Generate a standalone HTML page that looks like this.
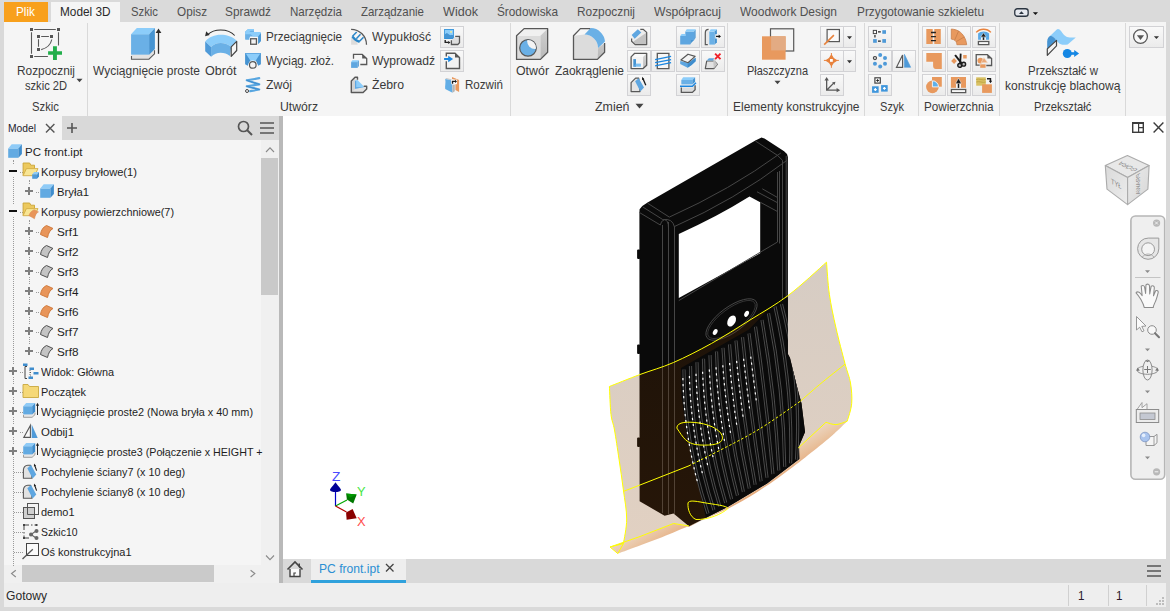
<!DOCTYPE html>
<html lang="pl"><head><meta charset="utf-8"><title>PC front.ipt</title>
<style>
html,body{margin:0;padding:0;background:#d9d9d9;overflow:hidden}
body{width:1170px;height:611px;font-family:"Liberation Sans",sans-serif}
#app{position:relative;width:1170px;height:611px;background:#d9d9d9;overflow:hidden}
#app div,#app svg,#app span{position:absolute}
.tx{white-space:nowrap;transform-origin:0 50%;font-family:"Liberation Sans",sans-serif}
.tx.b{font-weight:bold}
.tabbar{left:0;top:0;width:1170px;height:22px;background:#dadada}
.plik{left:4px;top:2px;width:44px;height:20px;background:#f8a01c}
.acttab{left:51px;top:2px;width:69px;height:20px;background:#f5f5f5}
.ribbon{left:4px;top:22px;width:1162px;height:94px;background:#f5f5f5}
.sep{width:1px;top:23px;height:93px;background:#d9d9d9}
.bb{background:linear-gradient(#f9f9f9,#ebebeb);border:1px solid #d2d2d5;box-sizing:border-box;height:22px}
.browser{left:4px;top:116px;width:275px;height:467px;background:#f5f5f5}
.bhead{left:62px;top:116px;width:217px;height:24px;background:#d9d9d9}
.split{left:279px;top:116px;width:4px;height:467px;background:#b9b9b9}
.vscroll{left:261px;top:140px;width:18px;height:425px;background:#f0f0f0}
.vthumb{left:261px;top:158px;width:17px;height:137px;background:#c9c9c9}
.hscroll{left:4px;top:565px;width:275px;height:18px;background:#f0f0f0}
.hthumb{left:22px;top:565px;width:192px;height:17px;background:#cacaca}
.doctabs{left:283px;top:559px;width:883px;height:24px;background:#d9d9d9}
.doctab{left:311px;top:559px;width:95px;height:21px;background:#eeeeee}
.doctabu{left:311px;top:580px;width:95px;height:3px;background:#2fa1dc}
.status{left:4px;top:583px;width:1162px;height:24px;background:#eeeeee}
.ssep{width:1px;top:585px;height:21px;background:#d0d0d0}
#vp{left:283px;top:116px;background:#fff}
.ic{overflow:visible}
.dotv{width:0;border-left:1px dotted #9a9a9a}
.doth{height:0;border-top:1px dotted #9a9a9a}
</style></head><body>
<div id="app">
<div class="tabbar"></div><div class="plik"></div><div class="acttab"></div>
<div class="ribbon"></div>
<div class="sep" style="left:87px"></div><div class="sep" style="left:510px"></div><div class="sep" style="left:727px"></div><div class="sep" style="left:864px"></div><div class="sep" style="left:918px"></div><div class="sep" style="left:999px"></div><div class="sep" style="left:1125px"></div>
<div class="bb" style="left:440px;top:26px;width:24px"></div><div class="bb" style="left:440px;top:50px;width:24px"></div><div class="bb" style="left:627px;top:26px;width:24px"></div><div class="bb" style="left:627px;top:50px;width:24px"></div><div class="bb" style="left:627px;top:74px;width:24px"></div><div class="bb" style="left:651px;top:50px;width:24px"></div><div class="bb" style="left:676px;top:26px;width:24px"></div><div class="bb" style="left:676px;top:50px;width:24px"></div><div class="bb" style="left:676px;top:74px;width:24px"></div><div class="bb" style="left:701px;top:26px;width:24px"></div><div class="bb" style="left:701px;top:50px;width:24px"></div><div class="bb" style="left:820px;top:26px;width:24px"></div><div class="bb" style="left:820px;top:50px;width:24px"></div><div class="bb" style="left:820px;top:74px;width:24px"></div><div class="bb" style="left:843px;top:26px;width:13px"></div><div class="bb" style="left:843px;top:50px;width:13px"></div><div class="bb" style="left:868px;top:26px;width:24px"></div><div class="bb" style="left:868px;top:50px;width:24px"></div><div class="bb" style="left:868px;top:74px;width:24px"></div><div class="bb" style="left:892px;top:50px;width:24px"></div><div class="bb" style="left:922px;top:26px;width:24px"></div><div class="bb" style="left:922px;top:50px;width:24px"></div><div class="bb" style="left:922px;top:74px;width:24px"></div><div class="bb" style="left:947px;top:26px;width:24px"></div><div class="bb" style="left:947px;top:50px;width:24px"></div><div class="bb" style="left:947px;top:74px;width:24px"></div><div class="bb" style="left:972px;top:26px;width:24px"></div><div class="bb" style="left:972px;top:50px;width:24px"></div><div class="bb" style="left:972px;top:74px;width:24px"></div><div class="bb" style="left:1129px;top:26px;width:35px"></div>
<div class="browser"></div><div class="bhead"></div><div class="split"></div>
<div class="vscroll"></div><div class="vthumb"></div><div class="hscroll"></div><div class="hthumb"></div>
<div class="dotv" style="left:13px;top:160px;height:406px"></div><div class="dotv" style="left:29px;top:180px;height:8px"></div><div class="dotv" style="left:29px;top:220px;height:136px"></div><div class="doth" style="left:18px;top:172px;width:5px"></div><div class="doth" style="left:18px;top:212px;width:5px"></div><div class="doth" style="left:18px;top:372px;width:5px"></div><div class="doth" style="left:18px;top:392px;width:5px"></div><div class="doth" style="left:18px;top:412px;width:5px"></div><div class="doth" style="left:18px;top:432px;width:5px"></div><div class="doth" style="left:18px;top:452px;width:5px"></div><div class="doth" style="left:14px;top:472px;width:9px"></div><div class="doth" style="left:14px;top:492px;width:9px"></div><div class="doth" style="left:14px;top:512px;width:9px"></div><div class="doth" style="left:14px;top:532px;width:9px"></div><div class="doth" style="left:14px;top:552px;width:9px"></div><div class="doth" style="left:34px;top:192px;width:5px"></div><div class="doth" style="left:34px;top:232px;width:5px"></div><div class="doth" style="left:34px;top:252px;width:5px"></div><div class="doth" style="left:34px;top:272px;width:5px"></div><div class="doth" style="left:34px;top:292px;width:5px"></div><div class="doth" style="left:34px;top:312px;width:5px"></div><div class="doth" style="left:34px;top:332px;width:5px"></div><div class="doth" style="left:34px;top:352px;width:5px"></div>
<div class="doctabs"></div><div class="doctab"></div><div class="doctabu"></div>
<div class="status"></div><div class="ssep" style="left:1068px"></div><div class="ssep" style="left:1108px"></div><div class="ssep" style="left:1146px"></div>
<svg class="ic" style="left:29px;top:27px" width="34" height="34" viewBox="0 0 34 34"><path d="M5.200 2.500h21.600M2.500 5.200v21.600M29.500 5.200v13.400M5.200 29.500h13.700M12.200 9.500h7.700M9.500 12.200v7.600" fill="none" stroke="#585858" stroke-width="1.100"/><path d="M12.200 22.600c6-1.500 9.500-5 10.600-10.100" fill="none" stroke="#585858" stroke-width="1.100"/><g fill="#555"><rect x="1" y="1" width="3" height="3"/><rect x="28" y="1" width="3" height="3"/><rect x="1" y="28" width="3" height="3"/><rect x="8" y="8" width="3" height="3"/><rect x="21" y="8" width="3" height="3"/><rect x="8" y="21" width="3" height="3"/></g><path d="M24 19.300h3.900v4.900h5.100v3.600h-5.100v5.100h-3.900v-5.100h-4.900v-3.600h4.900z" fill="#22ae4b"/></svg>
<svg class="ic" style="left:129px;top:27px" width="34" height="35" viewBox="0 0 34 35"><path d="M2.070 27.500v5h18l5.800-5.600v-5z" fill="#e2e2e2"/><path d="M2.500 29v3.200h17.400l5.600-5.400v-3.500" fill="none" stroke="#5a5a5a" stroke-width="1.100"/><path d="M2.070 7.150h18.030v20.500h-18.030z" fill="#6ab0e6"/><path d="M2.070 7.150l5.730-6.050h18.100l-5.800 6.050z" fill="#8ccdfa"/><path d="M20.100 7.150l5.800-6.050v20.800l-5.800 5.750z" fill="#4694d2"/><path d="M29.500 26.800v-22" stroke="#2e2e2e" stroke-width="1.300"/><path d="M29.500 1.400l2.900 4.500h-5.800z" fill="#2e2e2e"/></svg>
<svg class="ic" style="left:204px;top:28px" width="35" height="31" viewBox="0 0 35 31"><path d="M30.700 7.500c-3.500-3.800-8.500-5.500-14-5.500c-5.200 0-9.800 1.600-13 4.600" fill="none" stroke="#2e2e2e" stroke-width="1.100"/><path d="M2.200 3.200l3.500 3.700l-4.600 1.300z" fill="#2e2e2e"/><path d="M1.200 13.400c4-4.400 9.400-6.600 15.400-6.600s12 2 16.100 5.900l-5.500 6.200c-3-2.600-6.600-3.900-10.600-3.900s-6.800 1.300-9.500 3.900z" fill="#8ccdfa"/><path d="M7.100 18.900c2.700-2.600 5.500-3.900 9.500-3.900s7.600 1.300 10.600 3.900l-1.400 9.200c-2.600-2.200-5.600-3.300-9.200-3.300s-6.800 1.300-9.500 3.900z" fill="#6ab0e6"/><path d="M1.200 13.400l5.900 5.500v9.800l-5.900-5.500z" fill="#4f9ad8"/><path d="M27.200 18.900l5.500-5.500v9.100l-5.500 5.900z" fill="#f6f6f6" stroke="#444" stroke-width="1.200" stroke-linejoin="round"/></svg>
<svg class="ic" style="left:515px;top:27px" width="35" height="35" viewBox="0 0 35 35"><defs><clipPath id="hc"><circle cx="13" cy="20.900" r="8"/></clipPath><linearGradient id="hg" x1="0" y1="0" x2="0" y2="1"><stop offset="0" stop-color="#cfcfcf"/><stop offset="1" stop-color="#b9b9b9"/></linearGradient></defs><path d="M1.550 8.800h23.900v23.600h-23.900z" fill="#dcdcdc"/><path d="M1.550 8.800l7.550-7.200h23.550l-7.200 7.200z" fill="#f0f0f0"/><path d="M25.450 8.800l7.200-7.200v23.600l-7.200 7.200z" fill="url(#hg)"/><path d="M1.550 8.800l7.550-7.200h23.550v23.600l-7.200 7.200h-23.900z" fill="none" stroke="#585858" stroke-width="1.300" stroke-linejoin="round"/><circle cx="13" cy="20.900" r="8.300" fill="#6ab0e6" stroke="#585858" stroke-width="1.200"/><circle cx="19.800" cy="14.300" r="7.600" fill="#f4f4f4" clip-path="url(#hc)"/></svg>
<svg class="ic" style="left:572px;top:27px" width="35" height="35" viewBox="0 0 35 35"><defs><linearGradient id="fg" x1="0" y1="0" x2="0" y2="1"><stop offset="0" stop-color="#c9c9c9"/><stop offset="1" stop-color="#b6b6b6"/></linearGradient></defs><path d="M1.500 8.800l6.900-7.200h9.800l-5.700 5.900z" fill="#f6f6f6"/><path d="M1.500 8.800l11-1.300a14 14 0 0 1 13.600 13.400l-0.700 11.500h-23.900z" fill="#dcdcdc"/><path d="M26.100 20.900l6.500-4.900v9.200l-7.200 7.200z" fill="url(#fg)"/><path d="M18.200 1.600l0.700-0.500a14.600 14.600 0 0 1 14.100 13.500l-6.900 6.300a14 14 0 0 0 -13.600-13.400z" fill="#6ab0e6"/><path d="M18.200 1.600h-9.800l-6.900 7.200v23.600h23.900l7.200-7.200v-9.200" fill="none" stroke="#585858" stroke-width="1.300" stroke-linejoin="round"/></svg>
<svg class="ic" style="left:761px;top:27px" width="35" height="35" viewBox="0 0 35 35"><rect x="9.500" y="1.800" width="23.200" height="22.200" fill="none" stroke="#585858" stroke-width="1.200"/><rect x="1" y="9.300" width="23.600" height="23.400" fill="#e8995e"/><rect x="10.100" y="9.300" width="14.500" height="14.100" fill="#e3ab83"/></svg>
<svg class="ic" style="left:1045px;top:28px" width="37" height="32" viewBox="0 0 37 32"><path d="M5.300 7.800L11.500 1.800Q12.800 0.500 14.500 1.600C17.500 4 18.500 8 22 8.900C25 9.600 28 9.300 30.800 9.400L22.700 16.600C20 16.900 17.500 17 15.800 16.300C13.500 15.300 12.500 13.500 11.200 12Q9 8.500 5.300 7.800Z" fill="#8ccdfa"/><path d="M5.300 7.800Q2.400 9.500 2.200 13.500V20.900L11.200 12.200Q9 8.500 5.300 7.800Z" fill="#4694d2"/><path d="M2.300 20.900L11.500 12.400V17.900L2.300 27.300Z" fill="#f4f4f4" stroke="#444" stroke-width="1.200" stroke-linejoin="round"/><circle cx="22.300" cy="25.500" r="4.500" fill="#1587e4"/><path d="M25 25.500h5" stroke="#1587e4" stroke-width="2.600"/><path d="M29.200 21.900L34.100 25.500L29.200 29.100Z" fill="#1587e4"/></svg>
<svg class="ic" style="left:244px;top:27px" width="19" height="19" viewBox="0 0 19 19"><path d="M1.100 4.700L4.100 2.100H9.900V5.100H16.100L16.900 6.200V14.100L14.200 17.100V9.400H6V12.800H2L1.100 12.400Z" fill="#6ab0e6"/><path d="M1.100 4.700L4.100 2.100H9.900V5.100H16.100L16.900 6.200L14.200 9.400H9.500L6.500 7.200H1.100Z" fill="#8ccdfa"/><path d="M6.800 3.800H9.900V5.100H5.200z" fill="#6ab0e6"/><path d="M16.900 6.200V14.100L14.200 17.100V9.400Z" fill="#4694d2"/><rect x="5.400" y="10.500" width="8.300" height="8" fill="#fbfbfb"/><rect x="6.650" y="11.750" width="5.800" height="5.500" fill="#f2f2f2" stroke="#585858" stroke-width="1.300"/></svg>
<svg class="ic" style="left:244px;top:51px" width="19" height="19" viewBox="0 0 19 19"><path d="M1.100 2.100H16.900V13.200L14.200 14.700L11.800 9.400H6.300L3.900 14.700L1.100 13.200Z" fill="#4694d2"/><path d="M1.600 2.300H16.400L11.800 9.600L9 11L6.300 9.600Z" fill="#8ccdfa"/><path d="M1.100 2.100H16.900V2.900H1.100Z" fill="#5ea6e0"/><circle cx="8.800" cy="13.900" r="4.500" fill="#fbfbfb"/><circle cx="8.800" cy="13.900" r="3.300" fill="#f4f4f4" stroke="#585858" stroke-width="1.200"/></svg>
<svg class="ic" style="left:244px;top:75px" width="19" height="19" viewBox="0 0 19 19"><path d="M15.200 3.200L2.800 5.300L15.200 9.400L2.800 11.300L15.200 14.500L6.300 16.200" fill="none" stroke="#58a6e0" stroke-width="2.200" stroke-linejoin="round" stroke-linecap="round"/><path d="M2.800 5.300L15.200 9.400M2.800 11.300L15.200 14.500" fill="none" stroke="#3f8ccc" stroke-width="1" stroke-linecap="round"/><circle cx="3.050" cy="16" r="1.500" fill="#f8f8f8" stroke="#444" stroke-width="1"/></svg>
<svg class="ic" style="left:350px;top:27px" width="19" height="19" viewBox="0 0 19 19"><path d="M1.100 11.100A6.600 6.600 0 0 1 7.700 17.700H1.100Z" fill="#dcdcdc"/><path d="M1.100 2.300A15.400 15.400 0 0 1 16.500 17.700" fill="none" stroke="#585858" stroke-width="1.300"/><path d="M2.300 9.300Q5.200 13.600 9.600 14.800" fill="none" stroke="#2a86c8" stroke-width="2.300"/><path d="M2.500 9.200L6.700 5M6.300 11.700L10.500 7.300M9.300 14.600L13.500 10.200" fill="none" stroke="#2a86c8" stroke-width="1.500"/></svg>
<svg class="ic" style="left:350px;top:51px" width="19" height="19" viewBox="0 0 19 19"><path d="M3.500 7.700V3.400H12.200L16.700 7.500V13.500H10.300" fill="none" stroke="#585858" stroke-width="1.300"/><path d="M12.200 3.400L16.700 7.500H12.200Z" fill="#585858"/><path d="M1.100 11.100H7.500V16.900H1.100Z" fill="#5ea6e0"/><path d="M1.100 11.100L2.400 9.200H8.800L7.500 11.100Z" fill="#8ccdfa"/><path d="M7.500 11.100L8.800 9.200V14.900L7.500 16.900Z" fill="#4694d2"/></svg>
<svg class="ic" style="left:350px;top:75px" width="19" height="19" viewBox="0 0 19 19"><path d="M1.300 6L5 2.300H7.500V11.300H16.700V13.900L13.100 17.500H1.300Z" fill="#e2e2e2"/><path d="M1.300 6L5 2.300V14L1.300 17.500Z" fill="#d2d2d2"/><path d="M5 5.500L7.500 5.100L13.900 11.500V12.200L5 13.700Z" fill="#8ccdfa"/><path d="M5 5.500V13.700L13.900 12.200L6.200 12.200L6.200 6.500Z" fill="#5ea6e0"/><path d="M7.500 4.800V2.300H5L1.300 6V17.500H13.100L16.700 13.900V11.300H13.700" fill="none" stroke="#585858" stroke-width="1.400" stroke-linejoin="round"/></svg>
<svg class="ic" style="left:443px;top:28px" width="18" height="18" viewBox="0 0 18 18"><rect x="1.100" y="1" width="9.800" height="10" fill="#2f8fd8"/><rect x="1.900" y="1.800" width="8.200" height="5.500" fill="#8ccdfa"/><path d="M1.900 6.200l2-1.200l2.200 1.600l1.500 1.200l1.200-1l1.300 0.600v2.800h-8.200z" fill="#4694d2"/><rect x="7.200" y="3" width="1.800" height="1.800" fill="#e6e9a6"/><path d="M12.200 8.400h4.300v6.400l-1.700 1.700h-6.400v-4.300" fill="#dedede"/><path d="M12.200 8.400h4.300v6.400l-1.700 1.700h-6.400v-4.300" fill="none" stroke="#585858" stroke-width="1.300"/><path d="M2.200 12v2.400h3.500" fill="none" stroke="#222" stroke-width="1.400"/><path d="M5.200 12.900l2.300 1.600l-2.300 1.500z" fill="#222"/></svg>
<svg class="ic" style="left:443px;top:52px" width="18" height="18" viewBox="0 0 18 18"><path d="M3.300 1.300h8.700l4.500 4.300v10.900h-13.200z" fill="#f2f2f2"/><path d="M3.300 4.500v-3.200h8.700l4.500 4.300v10.900h-13.200v-7.300" fill="none" stroke="#585858" stroke-width="1.400"/><path d="M12 1.300l4.500 4.300h-4.500z" fill="#585858"/><path d="M1.100 7h5" stroke="#1a86e0" stroke-width="2"/><path d="M5.200 3.700l4.900 3.300l-4.900 3.200z" fill="#1a86e0"/></svg>
<svg class="ic" style="left:443px;top:76px" width="18" height="18" viewBox="0 0 18 18"><path d="M9 1.100l7.100 2.800v12l-3.700-2v-9.600l-3.400-1.400z" fill="#e8995e"/><path d="M2.200 3.100l1.100-1.100l6.200 1.400l-0.300 1.200z" fill="#c8c8c8"/><path d="M2.200 3.100l7 1.400l0.300 12.200l-7.300-3.600c-0.500-3 0.800-6-0-10z" fill="#62aee6"/><path d="M9.500 8.800l2.300-0.400v6.800l-2.300 1.500z" fill="#b4b4b4"/><path d="M8 3.600h6v4.600h-6z" fill="#fafafa"/><path d="M9.500 7.800v-2.400h2.800" fill="none" stroke="#1a1a1a" stroke-width="1.400"/><path d="M12 3.800l2 1.600l-2 1.600z" fill="#1a1a1a"/></svg>
<svg class="ic" style="left:630px;top:28px" width="18" height="18" viewBox="0 0 18 18"><path d="M1.600 11.100L10 1.300H13.100L16.700 4.400V16.600H5.100L1.600 13.300Z" fill="#ececec"/><path d="M16.700 4.400V16.600H5.100L3.400 13.600Z" fill="#c2c2c2"/><path d="M1.600 7.100L7.800 1.300L11.300 4.400L4.700 10.700Z" fill="#5ea6e0"/><path d="M10.300 1.300H13.100L16.700 4.400V16.600H5.100L1.600 13.300V10.400" fill="none" stroke="#585858" stroke-width="1.200" stroke-linejoin="round"/></svg>
<svg class="ic" style="left:630px;top:52px" width="18" height="18" viewBox="0 0 18 18"><defs><linearGradient id="shg" x1="0" y1="0" x2="0" y2="1"><stop offset="0" stop-color="#d6d6d6"/><stop offset="1" stop-color="#bcbcbc"/></linearGradient></defs><path d="M1.100 4.900h12v11.700h-12z" fill="#f4f4f4"/><path d="M1.100 4.900l3.600-3.600h12l-3.600 3.600z" fill="#fafafa"/><path d="M13.100 4.900l3.600-3.600v12l-3.600 3.300z" fill="url(#shg)"/><path d="M1.100 4.900l3.600-3.600h12v12l-3.600 3.300h-12z" fill="none" stroke="#585858" stroke-width="1.300" stroke-linejoin="round"/><path d="M3.300 7.100h2.700v7.600h-2.700z" fill="#4694d2"/><path d="M6 11.600h4.900v3.100h-4.900z" fill="#7cc0f2"/><path d="M3.300 14.700l2.700-3.100v3.100z" fill="#5ea6e0"/></svg>
<svg class="ic" style="left:630px;top:76px" width="18" height="18" viewBox="0 0 18 18"><path d="M1.100 15.600V6.700L5.600 2.200H8.700L10 15.600Z" fill="#e4e4e4" stroke="#585858" stroke-width="1.200" stroke-linejoin="round"/><path d="M5.100 5.300L8.700 2.200L14 11.600L10.400 15.600Z" fill="#5ea6e0"/><path d="M15.800 9.300L12.900 2.600" stroke="#1a1a1a" stroke-width="1.300"/><path d="M12.100 0.700l2.300 2.500l-2.400 0.900z" fill="#1a1a1a"/></svg>
<svg class="ic" style="left:654px;top:52px" width="18" height="18" viewBox="0 0 18 18"><path d="M3.300 1.300h11.600v15.300h-11.600z" fill="#f6f6f6" stroke="#585858" stroke-width="1.300"/><path d="M1.100 7.600L17.100 4.400M1.100 10.700L17.100 7.600M1.100 13.800L17.100 10.700" stroke="#1a86e0" stroke-width="1.300"/></svg>
<svg class="ic" style="left:679px;top:28px" width="18" height="18" viewBox="0 0 18 18"><path d="M1.200 8H6.300V3.600H15.200V12H11.200V16.600H1.200Z" fill="#5ea6e0"/><path d="M6.300 3.600L7.700 1.300H16.600L15.200 3.600ZM1.200 8L2.600 5.900H6.300V8Z" fill="#8ccdfa"/><path d="M15.200 3.600L16.600 1.300V9.800L15.200 12ZM11.200 12H15.200L12.600 14.400L11.200 16.600Z" fill="#4694d2"/></svg>
<svg class="ic" style="left:679px;top:52px" width="18" height="18" viewBox="0 0 18 18"><path d="M1.200 8.900V12L8.600 15.700L12.600 12.900L16.600 9.300V5.800L9 10.700Z" fill="#5ea6e0"/><path d="M8.600 12.300V15.700L12.600 12.900L16.600 9.300V5.800Z" fill="#3f8dcd"/><path d="M1.900 8L9 2.200L16.100 4.400L9 10.700Z" fill="#f4f4f4" stroke="#585858" stroke-width="1.200" stroke-linejoin="round"/></svg>
<svg class="ic" style="left:679px;top:76px" width="18" height="18" viewBox="0 0 18 18"><path d="M2.300 11.400V16.400H13.400L16.100 13.800V9.300L13.400 11.400Z" fill="#dcdcdc"/><path d="M2.300 11.600V16.400H13.400L16.100 13.800V9.300" fill="none" stroke="#585858" stroke-width="1.300" stroke-linejoin="round"/><path d="M2.300 4H13.400V8.400H2.300Z" fill="#6ab0e6"/><path d="M2.300 4L4.100 1.300H16.100L13.400 4Z" fill="#8ccdfa"/><path d="M13.400 4L16.100 1.300V5.800L13.400 8.400Z" fill="#4694d2"/><path d="M1 10.200H13.400L17 6.700" fill="none" stroke="#1a86e0" stroke-width="1.400"/></svg>
<svg class="ic" style="left:704px;top:28px" width="18" height="18" viewBox="0 0 18 18"><path d="M3.600 1.300C2 1.500 1.300 3 1.300 4.900V16.600H5.300V3.600Z" fill="#e8e8e8"/><path d="M4.600 1.300C2.300 1.300 1.300 2.600 1.300 4.900V16.600H3.800" fill="none" stroke="#585858" stroke-width="1.200"/><path d="M5.300 3.600H10.700V16.600H5.300Z" fill="#6ab0e6"/><path d="M5.300 3.600L6.700 1.300H12.900L10.700 3.600Z" fill="#8ccdfa"/><path d="M10.700 3.600L12.900 1.300V14.200L10.700 16.600Z" fill="#4694d2"/><path d="M11.300 6.200h6v4.400h-6z" fill="#f6f6f6"/><path d="M12 8.400h3.600" stroke="#1a1a1a" stroke-width="1.300"/><path d="M14.700 6.600l2.300 1.800l-2.300 1.800z" fill="#1a1a1a"/></svg>
<svg class="ic" style="left:704px;top:52px" width="18" height="18" viewBox="0 0 18 18"><path d="M1.300 16.600L2.700 9H10.700L13.300 12.400L9.800 16.600Z" fill="#e2e2e2" stroke="#585858" stroke-width="1.200" stroke-linejoin="round"/><path d="M10.700 9L13.300 12.400L9.800 16.600L9.300 9Z" fill="#c6c6c6"/><path d="M2.700 8.400L4.900 6.200H10.200L9.300 8.400Z" fill="#5ea6e0"/><path d="M9.300 8.400L10.200 6.200L13.300 12.400L10.700 9Z" fill="#d0d0d0"/><path d="M11.100 1.700l5.400 5.400m0-5.400l-5.400 5.400" stroke="#f0202a" stroke-width="1.900"/></svg>
<svg class="ic" style="left:822px;top:28px" width="19" height="18" viewBox="0 0 19 18"><rect x="5.100" y="1.500" width="12.300" height="12.100" fill="#fafafa" stroke="#585858" stroke-width="1.200"/><path d="M2.200 16.600L11.900 7.100" stroke="#e8823c" stroke-width="1.600"/></svg>
<svg class="ic" style="left:822px;top:52px" width="19" height="18" viewBox="0 0 19 18"><path d="M9.400 1v14.800M1.900 8.400h15" stroke="#e8823c" stroke-width="1"/><path d="M9.400 3.600Q10.700 7.100 14.200 8.400Q10.700 9.700 9.400 13.200Q8.100 9.700 4.600 8.400Q8.100 7.100 9.400 3.600Z" fill="#e8823c" stroke="#e8823c" stroke-width="1.600" stroke-linejoin="round"/><rect x="8" y="7" width="2.800" height="2.800" fill="#ffffff"/></svg>
<svg class="ic" style="left:822px;top:76px" width="20" height="19" viewBox="0 0 20 19"><path d="M4.650 3.500v10.700h11.200M4.650 14.200l7.300-7.300" fill="none" stroke="#585858" stroke-width="1.300"/><path d="M4.650 0.900l2.200 3.600h-4.400zM18.200 14.200l-3.600 2.100v-4.200zM13.500 5.800l-1 3.300l-2.500-2.500z" fill="#585858"/></svg>
<svg class="ic" style="left:846px;top:35px" width="7" height="5" viewBox="0 0 7 5"><path d="M1 1.200h5l-2.500 3z" fill="#333"/></svg>
<svg class="ic" style="left:846px;top:59px" width="7" height="5" viewBox="0 0 7 5"><path d="M1 1.200h5l-2.500 3z" fill="#333"/></svg>
<svg class="ic" style="left:871px;top:28px" width="18" height="18" viewBox="0 0 18 18"><path d="M7 3.900h2.800M3.950 7.100v2.500M7 13.200h2.800" stroke="#222" stroke-width="1.200"/><rect x="2.300" y="2.400" width="3.200" height="3.200" fill="#fafafa" stroke="#444" stroke-width="1"/><rect x="11.300" y="2.200" width="3.700" height="3.600" fill="#4f9ad8"/><rect x="2.100" y="11.100" width="3.700" height="3.700" fill="#4f9ad8"/><rect x="11.300" y="11.100" width="3.700" height="3.700" fill="#4f9ad8"/></svg>
<svg class="ic" style="left:871px;top:52px" width="18" height="18" viewBox="0 0 18 18"><circle cx="3.950" cy="6.100" r="1.600" fill="#d6d6d6" stroke="#444" stroke-width="1.100"/><g fill="#4f9ad8"><circle cx="9.200" cy="2.900" r="2"/><circle cx="14" cy="6.100" r="2"/><circle cx="14" cy="11.700" r="2"/><circle cx="9.200" cy="14.600" r="2"/><circle cx="3.950" cy="11.700" r="2"/></g></svg>
<svg class="ic" style="left:871px;top:76px" width="18" height="18" viewBox="0 0 18 18"><rect x="3.900" y="1.800" width="5.400" height="5.300" fill="#fafafa" stroke="#444" stroke-width="1.200"/><path d="M6.600 3.200v2.600M5.300 4.500h2.600" stroke="#222" stroke-width="1"/><rect x="1.050" y="10.300" width="6.600" height="6.500" fill="#3f96dc"/><rect x="10.100" y="9.100" width="6.600" height="6.500" fill="#3f96dc"/><path d="M4.350 12.100v2.900M2.900 13.550h2.900M13.400 10.900v2.900M11.950 12.350h2.900" stroke="#fff" stroke-width="1.200"/></svg>
<svg class="ic" style="left:895px;top:52px" width="18" height="18" viewBox="0 0 18 18"><path d="M7.600 2.900V15.300H1.500Z" fill="#f6f6f6" stroke="#585858" stroke-width="1.200" stroke-linejoin="miter"/><path d="M9.400 2.300L15.700 15.300H9.400Z" fill="#4f9ad8" stroke="#4f9ad8" stroke-width="0.600"/></svg>
<svg class="ic" style="left:925px;top:28px" width="18" height="18" viewBox="0 0 18 18"><rect x="1.300" y="1" width="6.400" height="15" fill="#e8995e"/><rect x="9.300" y="1" width="6.500" height="15" fill="#e8995e"/><path d="M6 4.500h4.900M6 8.600h4.900M6 12.700h4.900" stroke="#222" stroke-width="1.300"/></svg>
<svg class="ic" style="left:950px;top:28px" width="18" height="18" viewBox="0 0 18 18"><path d="M1.300 1.050C4 1.200 6.500 1.900 8.600 3C11 4.500 13 6.600 14.250 9C15.600 11.400 16.400 14 16.700 16.700H6.900C6.700 14.800 6.100 13.400 5.100 12.500C4.100 11.700 2.800 11.300 1.300 11.100Z" fill="#e8995e" stroke="#c9804c" stroke-width="0.800" stroke-linejoin="round"/><path d="M4.800 11.800L8.600 3M6.400 13.500L14.200 9" stroke="#c9804c" stroke-width="0.900"/></svg>
<svg class="ic" style="left:975px;top:28px" width="18" height="18" viewBox="0 0 18 18"><path d="M1.200 4.400C5 0.100 12.100 0.100 15.900 4.400" fill="none" stroke="#e8823c" stroke-width="1.400"/><path d="M3.100 11.800V5.500C5.500 2.800 11.700 2.800 14.100 5.500V11.800Z" fill="#5aa9e6"/><path d="M6 9.600h5v2.300h-5z" fill="#f6f6f6"/><path d="M8.500 11.900V7.500" stroke="#1a1a1a" stroke-width="1.500"/><path d="M5.700 9L8.500 4.800L11.300 9Z" fill="#1a1a1a" stroke="#f6f6f6" stroke-width="0.500"/><rect x="3.400" y="13.500" width="10.400" height="3.100" fill="#ffffff" stroke="#585858" stroke-width="1.300"/></svg>
<svg class="ic" style="left:925px;top:52px" width="18" height="18" viewBox="0 0 18 18"><path d="M1.300 1H16.800V16.900H10.900C9.200 16.800 8.200 15.700 8.100 13.900V9.700H1.300Z" fill="#e8995e"/></svg>
<svg class="ic" style="left:950px;top:52px" width="18" height="18" viewBox="0 0 18 18"><rect x="13.200" y="3" width="3.500" height="3.500" fill="#e8995e"/><path d="M1.100 9L4.100 6L6.900 9L4.100 12Z" fill="#e8995e"/><path d="M5.100 3L12.400 12.300" stroke="#1a1a1a" stroke-width="2"/><path d="M10.700 1.600L10.100 12.500" stroke="#1a1a1a" stroke-width="1.800"/><circle cx="9.700" cy="13.400" r="1.900" fill="#bbb" stroke="#1a1a1a" stroke-width="1.400"/><circle cx="13.700" cy="12.200" r="1.900" fill="#bbb" stroke="#1a1a1a" stroke-width="1.400"/></svg>
<svg class="ic" style="left:975px;top:52px" width="18" height="18" viewBox="0 0 18 18"><path d="M4.700 13.200H1.200V2.700H12.400L16.600 6.500V13.500H11.300" fill="none" stroke="#585858" stroke-width="1.300"/><path d="M12.400 2.700L16.600 6.500H12.400Z" fill="#585858"/><circle cx="5.400" cy="8.600" r="2.900" fill="#e8995e"/><path d="M8.900 5.500L12.700 10.700H6.100Z" fill="#eaa878" stroke="#f4e4d6" stroke-width="0.600"/><rect x="5.200" y="12.300" width="5.400" height="3.500" fill="#e8995e"/></svg>
<svg class="ic" style="left:925px;top:76px" width="18" height="18" viewBox="0 0 18 18"><rect x="7" y="1" width="9.800" height="9.700" fill="#e8995e"/><circle cx="7.400" cy="10.900" r="6.300" fill="#e8995e"/><path d="M7.400 10.900V4.800A6.100 6.100 0 0 1 13.500 10.900Z" fill="#5eb0ea" stroke="#f8f8f8" stroke-width="0.900"/></svg>
<svg class="ic" style="left:950px;top:76px" width="18" height="18" viewBox="0 0 18 18"><rect x="0.900" y="1" width="15.100" height="10.800" fill="#e8995e"/><path d="M6 8h5v3.900h-5z" fill="#f6f6f6"/><path d="M8.500 11.900V6" stroke="#1a1a1a" stroke-width="1.500"/><path d="M5.600 7.400L8.500 2.200L11.400 7.400Z" fill="#1a1a1a" stroke="#f6f6f6" stroke-width="0.500"/><rect x="1.400" y="13.500" width="14.300" height="3.100" fill="#ffffff" stroke="#585858" stroke-width="1.300"/></svg>
<svg class="ic" style="left:975px;top:76px" width="18" height="18" viewBox="0 0 18 18"><rect x="1.200" y="1.300" width="9.600" height="8.400" fill="#d9c164"/><path d="M1.200 3.500c3-1.200 6.500 1.200 9.600 0M1.200 6c3-1.200 6.500 1.200 9.600 0" fill="none" stroke="#b89e3e" stroke-width="0.800"/><rect x="7.100" y="8.300" width="9.800" height="8.600" fill="#e8995e"/><path d="M12 2.700h3.500v3" fill="none" stroke="#1a1a1a" stroke-width="1.400"/><path d="M13.900 4.800h3.200l-1.600 2.500z" fill="#1a1a1a"/></svg>
<svg class="ic" style="left:1132px;top:28px" width="30" height="18" viewBox="0 0 30 18"><circle cx="8.500" cy="8.500" r="6.900" fill="#f8f8f8" stroke="#585858" stroke-width="1.300"/><path d="M4.900 7.200h7.200l-3.600 4.700z" fill="#585858"/><path d="M21.900 8.200h5.100l-2.550 2.700z" fill="#333"/></svg>
<svg class="ic" style="left:1012px;top:6px" width="28" height="12" viewBox="0 0 28 12"><rect x="2.750" y="2.750" width="13.400" height="7.500" rx="2.600" fill="#e6e9ef" stroke="#2a3440" stroke-width="1.300"/><path d="M7 7.900h4.900l-2.450-2.700z" fill="#2a3440"/><path d="M20.900 6.200h5.100l-2.550 2.800z" fill="#111"/></svg>
<svg class="ic" style="left:76px;top:78px" width="7" height="5" viewBox="0 0 7 5"><path d="M0.500 0.800h6l-3 3.500z" fill="#444"/></svg>
<svg class="ic" style="left:635px;top:103px" width="9" height="6" viewBox="0 0 9 6"><path d="M0.500 0.800h8l-4 4.600z" fill="#444"/></svg>
<svg class="ic" style="left:774px;top:80px" width="7" height="5" viewBox="0 0 7 5"><path d="M0.500 0.800h6l-3 3.500z" fill="#444"/></svg>
<svg class="ic" style="left:45px;top:123px" width="11" height="11" viewBox="0 0 11 11"><path d="M1 1l8.400 8.400m0-8.400l-8.400 8.400" stroke="#555" stroke-width="1.400"/></svg>
<svg class="ic" style="left:66px;top:122px" width="12" height="12" viewBox="0 0 12 12"><path d="M6 1v10M1 6h10" stroke="#555" stroke-width="1.600"/></svg>
<svg class="ic" style="left:237px;top:120px" width="16" height="16" viewBox="0 0 16 16"><circle cx="6.500" cy="6.500" r="5" fill="none" stroke="#555" stroke-width="1.700"/><path d="M10 10l5 5" stroke="#555" stroke-width="1.900"/></svg>
<svg class="ic" style="left:259px;top:121px" width="16" height="14" viewBox="0 0 16 14"><path d="M1 2h14M1 7h14M1 12h14" stroke="#555" stroke-width="1.700"/></svg>
<svg class="ic" style="left:264.5px;top:146px" width="10" height="8" viewBox="0 0 10 8"><path d="M1 6l4-4.200l4 4.200" fill="none" stroke="#8a8a8a" stroke-width="1.100"/></svg>
<svg class="ic" style="left:265px;top:554px" width="10" height="8" viewBox="0 0 10 8"><path d="M1 1.500l4 4.200l4-4.200" fill="none" stroke="#8a8a8a" stroke-width="1.100"/></svg>
<svg class="ic" style="left:10px;top:569px" width="8" height="10" viewBox="0 0 8 10"><path d="M5.800 1.200L1.600 4.600L5.800 8" fill="none" stroke="#8a8a8a" stroke-width="1.200"/></svg>
<svg class="ic" style="left:249px;top:569px" width="8" height="10" viewBox="0 0 8 10"><path d="M1.600 1.200L5.800 4.600L1.600 8" fill="none" stroke="#8a8a8a" stroke-width="1.200"/></svg>
<svg class="ic" style="left:7px;top:143px" width="16" height="16" viewBox="0 0 16 16"><path d="M1.200 5.400h10.200v9.400h-10.200z" fill="#62aae2"/><path d="M1.200 5.400l3.500-4.100h10.200l-3.500 4.100z" fill="#8fcbf7"/><path d="M11.400 5.400l3.500-4.100v9.800l-3.500 3.700z" fill="#3f8dcd"/></svg>
<svg class="ic" style="left:39px;top:183px" width="16" height="16" viewBox="0 0 16 16"><path d="M1.200 5.400h10.200v9.400h-10.200z" fill="#62aae2"/><path d="M1.200 5.400l3.500-4.100h10.200l-3.500 4.100z" fill="#8fcbf7"/><path d="M11.400 5.400l3.500-4.100v9.800l-3.500 3.700z" fill="#3f8dcd"/></svg>
<svg class="ic" style="left:22px;top:162px" width="18" height="18" viewBox="0 0 18 18"><path d="M1.100 13.700V1H7.700L8.800 3.200H12.500V6.600" fill="#ecc95e" stroke="#c9a436" stroke-width="0.900" stroke-linejoin="round"/><path d="M1.100 13.700L4.400 6.600H16L12.600 13.700Z" fill="#f8e594" stroke="#d2ad45" stroke-width="0.900" stroke-linejoin="round"/><path d="M10.200 12.200h4.800v4.600h-4.800z" fill="#4f9ad8"/><path d="M10.200 12.200l2-2.200h4.800l-2 2.200z" fill="#8fcbf7"/><path d="M15 12.200l2-2.200v4.600l-2 2.200z" fill="#3f8dcd"/></svg>
<svg class="ic" style="left:22px;top:202px" width="18" height="18" viewBox="0 0 18 18"><path d="M1.100 13.700V1H7.700L8.800 3.200H12.500V6.600" fill="#ecc95e" stroke="#c9a436" stroke-width="0.900" stroke-linejoin="round"/><path d="M1.100 13.700L4.400 6.600H16L12.600 13.700Z" fill="#f8e594" stroke="#d2ad45" stroke-width="0.900" stroke-linejoin="round"/><path d="M6.900 13.500c1-2.800 2.800-4.800 5.300-5.800l4.300 2.200c-2 0.800-3.200 3-4 6.900z" fill="#e8955a" stroke="#d98850" stroke-width="0.500"/></svg>
<svg class="ic" style="left:39px;top:224px" width="16" height="16" viewBox="0 0 16 16"><path d="M1.500 10.500c0.500-4 2.500-7.500 6-9l6.500 3c-3 1.500-4.500 4.500-5.500 9z" fill="#e8955a" stroke="#d07a3c" stroke-width="1" stroke-linejoin="round"/></svg>
<svg class="ic" style="left:39px;top:244px" width="16" height="16" viewBox="0 0 16 16"><path d="M1.500 10.500c0.500-4 2.500-7.500 6-9l6.500 3c-3 1.500-4.500 4.500-5.500 9z" fill="#c4c4c4" stroke="#505050" stroke-width="1" stroke-linejoin="round"/></svg>
<svg class="ic" style="left:39px;top:264px" width="16" height="16" viewBox="0 0 16 16"><path d="M1.500 10.500c0.500-4 2.500-7.500 6-9l6.500 3c-3 1.500-4.500 4.500-5.500 9z" fill="#c4c4c4" stroke="#505050" stroke-width="1" stroke-linejoin="round"/></svg>
<svg class="ic" style="left:39px;top:284px" width="16" height="16" viewBox="0 0 16 16"><path d="M1.500 10.500c0.500-4 2.500-7.500 6-9l6.500 3c-3 1.500-4.500 4.500-5.500 9z" fill="#e8955a" stroke="#d07a3c" stroke-width="1" stroke-linejoin="round"/></svg>
<svg class="ic" style="left:39px;top:304px" width="16" height="16" viewBox="0 0 16 16"><path d="M1.500 10.500c0.500-4 2.500-7.500 6-9l6.500 3c-3 1.500-4.500 4.500-5.500 9z" fill="#e8955a" stroke="#d07a3c" stroke-width="1" stroke-linejoin="round"/></svg>
<svg class="ic" style="left:39px;top:324px" width="16" height="16" viewBox="0 0 16 16"><path d="M1.500 10.500c0.500-4 2.500-7.500 6-9l6.500 3c-3 1.500-4.500 4.500-5.500 9z" fill="#c4c4c4" stroke="#505050" stroke-width="1" stroke-linejoin="round"/></svg>
<svg class="ic" style="left:39px;top:344px" width="16" height="16" viewBox="0 0 16 16"><path d="M1.500 10.500c0.500-4 2.500-7.500 6-9l6.500 3c-3 1.500-4.500 4.500-5.500 9z" fill="#c4c4c4" stroke="#505050" stroke-width="1" stroke-linejoin="round"/></svg>
<svg class="ic" style="left:22px;top:362px" width="18" height="18" viewBox="0 0 18 18"><path d="M5 4.500h-2v12h2" fill="none" stroke="#444" stroke-width="1"/><path d="M8 8v6h1.500M8 10.500h2" fill="none" stroke="#444" stroke-width="0.800" stroke-dasharray="1 1"/><g fill="#3f8dcd"><rect x="1" y="1.500" width="4.500" height="2.500"/><rect x="7.500" y="5.500" width="4.500" height="2.500"/><rect x="11.500" y="10" width="5" height="2.500"/><rect x="6.500" y="14.500" width="4.500" height="2.500"/></g></svg>
<svg class="ic" style="left:22px;top:383px" width="18" height="16" viewBox="0 0 18 16"><path d="M1 14.500v-13h5l1.500 2h9v11z" fill="#f5d877" stroke="#c9a83e" stroke-width="0.900" stroke-linejoin="round"/></svg>
<svg class="ic" style="left:22px;top:402px" width="18" height="18" viewBox="0 0 18 18"><path d="M1.200 12.300v3.200h9l3-2.800v-3z" fill="#e6e6e6"/><path d="M1.500 13v2.300h8.600l2.900-2.700v-2" fill="none" stroke="#8a8a8a" stroke-width="0.800"/><path d="M1.200 4.200h9v8.200h-9z" fill="#62aae2"/><path d="M1.200 4.200l3-3.200h9l-3 3.200z" fill="#8fcbf7"/><path d="M10.200 4.200l3-3.200v8.400l-3 3z" fill="#3f8dcd"/><path d="M15.500 13v-10" stroke="#222" stroke-width="1"/><path d="M15.500 0.800l1.600 3h-3.200z" fill="#222"/></svg>
<svg class="ic" style="left:22px;top:442px" width="18" height="18" viewBox="0 0 18 18"><path d="M1.200 12.300v3.200h9l3-2.800v-3z" fill="#e6e6e6"/><path d="M1.500 13v2.300h8.600l2.900-2.700v-2" fill="none" stroke="#8a8a8a" stroke-width="0.800"/><path d="M1.200 4.200h9v8.200h-9z" fill="#62aae2"/><path d="M1.200 4.200l3-3.200h9l-3 3.200z" fill="#8fcbf7"/><path d="M10.200 4.200l3-3.200v8.400l-3 3z" fill="#3f8dcd"/><path d="M15.500 13v-10" stroke="#222" stroke-width="1"/><path d="M15.500 0.800l1.600 3h-3.200z" fill="#222"/></svg>
<svg class="ic" style="left:22px;top:423px" width="18" height="18" viewBox="0 0 18 18"><path d="M8.400 2.500V14.400H1.800Z" fill="#fafafa" stroke="#585858" stroke-width="1.100"/><path d="M9.700 1.600L15.700 14.900H9.700Z" fill="#4f9ad8"/></svg>
<svg class="ic" style="left:22px;top:463px" width="18" height="18" viewBox="0 0 18 18"><path d="M1.400 15.300V6.800C1.600 4.200 3.200 2.400 5.800 2.200H8.700L10 15.300Z" fill="#e2e2e2" stroke="#585858" stroke-width="1.100" stroke-linejoin="round"/><path d="M5.300 5.300L9 2L14.300 11.400L10.600 15.400Z" fill="#5ea6e0"/><path d="M14.600 7.600L12.700 2.300" stroke="#1a1a1a" stroke-width="1.100"/><path d="M12 0.500l2 2.200l-2.100 0.800z" fill="#1a1a1a"/></svg>
<svg class="ic" style="left:22px;top:483px" width="18" height="18" viewBox="0 0 18 18"><path d="M1.400 15.300V6.800C1.600 4.200 3.200 2.400 5.800 2.200H8.700L10 15.300Z" fill="#e2e2e2" stroke="#585858" stroke-width="1.100" stroke-linejoin="round"/><path d="M5.300 5.300L9 2L14.300 11.400L10.600 15.400Z" fill="#5ea6e0"/><path d="M14.600 7.600L12.700 2.300" stroke="#1a1a1a" stroke-width="1.100"/><path d="M12 0.500l2 2.200l-2.100 0.800z" fill="#1a1a1a"/></svg>
<svg class="ic" style="left:22px;top:502px" width="18" height="18" viewBox="0 0 18 18"><rect x="5.500" y="1.500" width="11" height="11" fill="#f4f4f4" stroke="#555" stroke-width="1"/><rect x="1.500" y="5.500" width="11" height="11" fill="#d0d0d0" stroke="#555" stroke-width="1"/><path d="M5.500 5.500v7h7" fill="none" stroke="#555" stroke-width="1"/></svg>
<svg class="ic" style="left:22px;top:523px" width="18" height="18" viewBox="0 0 18 18"><path d="M2 2h13M2 2v13M2 15h6" fill="none" stroke="#444" stroke-width="1" stroke-dasharray="5 2 1.500 2"/><rect x="1" y="1" width="2" height="2" fill="#444"/><rect x="13.500" y="1" width="2" height="2" fill="#444"/><rect x="1" y="14" width="2" height="2" fill="#444"/><path d="M14 8l-5 3.500l5 3.500" fill="none" stroke="#666" stroke-width="1.100"/><circle cx="14.500" cy="8" r="2" fill="#666"/><circle cx="9" cy="11.500" r="2" fill="#666"/><circle cx="14.500" cy="15" r="2" fill="#666"/></svg>
<svg class="ic" style="left:22px;top:542px" width="18" height="18" viewBox="0 0 18 18"><rect x="4.500" y="1.500" width="12" height="12" fill="#fafafa" stroke="#444" stroke-width="1"/><path d="M0.500 17L10.800 7.300" stroke="#555" stroke-width="1.300"/></svg>
<svg class="ic" style="left:7px;top:165px" width="12" height="12" viewBox="0 0 12 12"><rect width="12" height="12" fill="#f5f5f5"/><path d="M2 6h8" stroke="#111" stroke-width="2"/></svg>
<svg class="ic" style="left:7px;top:205px" width="12" height="12" viewBox="0 0 12 12"><rect width="12" height="12" fill="#f5f5f5"/><path d="M2 6h8" stroke="#111" stroke-width="2"/></svg>
<svg class="ic" style="left:23px;top:185px" width="12" height="12" viewBox="0 0 12 12"><rect width="12" height="12" fill="#f5f5f5"/><path d="M2 6h8M6 2v8" stroke="#7e7e7e" stroke-width="2"/></svg>
<svg class="ic" style="left:23px;top:225px" width="12" height="12" viewBox="0 0 12 12"><rect width="12" height="12" fill="#f5f5f5"/><path d="M2 6h8M6 2v8" stroke="#7e7e7e" stroke-width="2"/></svg>
<svg class="ic" style="left:23px;top:245px" width="12" height="12" viewBox="0 0 12 12"><rect width="12" height="12" fill="#f5f5f5"/><path d="M2 6h8M6 2v8" stroke="#7e7e7e" stroke-width="2"/></svg>
<svg class="ic" style="left:23px;top:265px" width="12" height="12" viewBox="0 0 12 12"><rect width="12" height="12" fill="#f5f5f5"/><path d="M2 6h8M6 2v8" stroke="#7e7e7e" stroke-width="2"/></svg>
<svg class="ic" style="left:23px;top:285px" width="12" height="12" viewBox="0 0 12 12"><rect width="12" height="12" fill="#f5f5f5"/><path d="M2 6h8M6 2v8" stroke="#7e7e7e" stroke-width="2"/></svg>
<svg class="ic" style="left:23px;top:305px" width="12" height="12" viewBox="0 0 12 12"><rect width="12" height="12" fill="#f5f5f5"/><path d="M2 6h8M6 2v8" stroke="#7e7e7e" stroke-width="2"/></svg>
<svg class="ic" style="left:23px;top:325px" width="12" height="12" viewBox="0 0 12 12"><rect width="12" height="12" fill="#f5f5f5"/><path d="M2 6h8M6 2v8" stroke="#7e7e7e" stroke-width="2"/></svg>
<svg class="ic" style="left:23px;top:345px" width="12" height="12" viewBox="0 0 12 12"><rect width="12" height="12" fill="#f5f5f5"/><path d="M2 6h8M6 2v8" stroke="#7e7e7e" stroke-width="2"/></svg>
<svg class="ic" style="left:7px;top:365px" width="12" height="12" viewBox="0 0 12 12"><rect width="12" height="12" fill="#f5f5f5"/><path d="M2 6h8M6 2v8" stroke="#7e7e7e" stroke-width="2"/></svg>
<svg class="ic" style="left:7px;top:385px" width="12" height="12" viewBox="0 0 12 12"><rect width="12" height="12" fill="#f5f5f5"/><path d="M2 6h8M6 2v8" stroke="#7e7e7e" stroke-width="2"/></svg>
<svg class="ic" style="left:7px;top:405px" width="12" height="12" viewBox="0 0 12 12"><rect width="12" height="12" fill="#f5f5f5"/><path d="M2 6h8M6 2v8" stroke="#7e7e7e" stroke-width="2"/></svg>
<svg class="ic" style="left:7px;top:425px" width="12" height="12" viewBox="0 0 12 12"><rect width="12" height="12" fill="#f5f5f5"/><path d="M2 6h8M6 2v8" stroke="#7e7e7e" stroke-width="2"/></svg>
<svg class="ic" style="left:7px;top:445px" width="12" height="12" viewBox="0 0 12 12"><rect width="12" height="12" fill="#f5f5f5"/><path d="M2 6h8M6 2v8" stroke="#7e7e7e" stroke-width="2"/></svg>
<svg class="ic" style="left:286px;top:560px" width="18" height="18" viewBox="0 0 18 18"><path d="M1.500 9.500l7.500-7.500l7.500 7.500" fill="none" stroke="#444" stroke-width="1.600" stroke-linejoin="miter"/><path d="M12.500 3.500v3.500l1.500 1.500v-5z" fill="#444"/><path d="M4 9v7.500h10v-7.500" fill="#fafafa" stroke="#444" stroke-width="1.400"/><path d="M8 16.500v-3.500h2" fill="none" stroke="#444" stroke-width="1.200"/></svg>
<svg class="ic" style="left:385px;top:563px" width="10" height="10" viewBox="0 0 10 10"><path d="M1 1l7.500 7.500m0-7.500l-7.500 7.500" stroke="#444" stroke-width="1.300"/></svg>
<svg class="ic" style="left:1146px;top:564px" width="16" height="14" viewBox="0 0 16 14"><path d="M1 2h14M1 7h14M1 12h14" stroke="#555" stroke-width="1.700"/></svg>
<svg class="ic" style="left:1156px;top:597px" width="9" height="9" viewBox="0 0 9 9"><g fill="#bdbdbd"><rect x="6" y="0" width="2" height="2"/><rect x="3" y="3" width="2" height="2"/><rect x="6" y="3" width="2" height="2"/><rect x="0" y="6" width="2" height="2"/><rect x="3" y="6" width="2" height="2"/><rect x="6" y="6" width="2" height="2"/></g></svg>
<svg id="vp" width="883" height="443" viewBox="283 116 883 443"><defs><linearGradient id="bandg" gradientUnits="userSpaceOnUse" x1="700" y1="494.3" x2="713.5" y2="517.8"><stop offset="0" stop-color="#ecd6c2"/><stop offset="0.45" stop-color="#e9c4a2"/><stop offset="1" stop-color="#e6ab7c"/></linearGradient></defs>
<path d="M610 547L640 536.5L673.5 523.5L689 526.7L728 507.3L767 484L799.3 459.5L798.2 448L826 422.3C827.7 422.7 832.5 424.8 836 424.6C839.5 424.4 845.3 421.8 847.2 421.2C845.5 422.8 841.1 427.3 837 431C832.9 434.7 832.5 435.6 822.7 443.4C812.9 451.2 792.9 467.5 778 477.9C763.1 488.3 751 496.6 733.6 505.7C716.2 514.8 692.8 524.4 673.5 532.4C654.2 540.4 627.1 550.1 617.8 553.6L610 547Z" fill="url(#bandg)"/>
<defs><clipPath id="bodyclip"><polygon points="639.4,212.5 639.6,209.3 642.3,206 647.6,202.4 755.4,140.6 761.6,137.6 764.5,138.6 784.1,151.3 787,154 787.9,157 787.9,354 790,358 796,383 801.5,403.4 805,432 799,446 799.3,459 767,483.5 728,506.8 689,526.2 673.5,513.5 664.6,515.7 639.6,501.3"/></clipPath></defs>
<polygon points="639.4,212.5 639.6,209.3 642.3,206 647.6,202.4 755.4,140.6 761.6,137.6 764.5,138.6 784.1,151.3 787,154 787.9,157 787.9,354 790,358 796,383 801.5,403.4 805,432 799,446 799.3,459 767,483.5 728,506.8 689,526.2 673.5,513.5 664.6,515.7 639.6,501.3" fill="#0a0a0a"/>
<rect x="637.1" y="249.5" width="3" height="9.5" rx="1" fill="#0a0a0a"/>
<rect x="637.1" y="344.5" width="3" height="9.5" rx="1" fill="#0a0a0a"/>
<rect x="637.1" y="437.5" width="3" height="9.5" rx="1" fill="#0a0a0a"/>
<path d="M678.8 233.9Q716 217.5 749.5 196.6L760.2 202.2V253.3L678.8 298Z" fill="#ffffff"/>
<path d="M662.5 225V513M668.5 222V515M674.5 226.6V514M639.6 212.6L660.3 225M642.7 206.9L662.8 219.6M647.6 203.2L669.3 217.1M660.3 225Q661 220.5 664.5 219.7Q668.5 220 668.5 228M662.8 219.6Q672.5 218 674.5 227M669.3 217.1Q730 190 780.8 153M674.3 226.6Q735 200 787 160.3M755.4 141L777.5 155.4L782.5 160.3V352M786.2 156V354M777.5 172V242L678.8 300.6M779.5 171V243.5M757 191.8L777.8 202.9M762.3 188.8L777.8 197.7M760.2 202.2L777.8 211.7" fill="none" stroke="#464646" stroke-width="1"/>
<g transform="rotate(-36.5 731.5 319.5)"><ellipse cx="731.5" cy="319.5" rx="30.5" ry="12.5" fill="none" stroke="#484848" stroke-width="0.9"/><ellipse cx="731.5" cy="319.5" rx="28.5" ry="10.8" fill="none" stroke="#3a3a3a" stroke-width="0.8"/></g>
<ellipse cx="731.6" cy="321" rx="3.9" ry="5.9" transform="rotate(28 731.6 321)" fill="#ffffff"/><ellipse cx="715.2" cy="332" rx="2.1" ry="3.2" transform="rotate(28 715.2 332)" fill="#ffffff"/><ellipse cx="746.6" cy="313.8" rx="2.1" ry="3.2" transform="rotate(28 746.6 313.8)" fill="#ffffff"/>
<defs><linearGradient id="sfg" gradientUnits="userSpaceOnUse" x1="0" y1="262" x2="0" y2="550"><stop offset="0" stop-color="rgb(85,43,6)"/><stop offset="1" stop-color="rgb(132,62,0)"/></linearGradient></defs>
<path d="M609.4 386.5C614.5 384.5 629.3 378.5 640 374.5C650.7 370.5 661.6 367.7 673.5 362.5C685.4 357.3 698.6 350.6 711.4 343.5C724.1 336.4 737.2 328 750 320C762.8 312 775.2 305.2 788 295.6C800.8 286 820.1 267.8 826.5 262.2C827 267.6 827.8 283.5 829.4 294.5C831 305.5 833.4 316.5 836 328C838.6 339.5 842.6 354.4 845 363.6C847.4 372.8 849.4 376.4 850.5 383C851.6 389.6 852.2 397 851.7 403.4C851.2 409.8 848 418.2 847.2 421.2C845.3 421.8 839.5 424.4 836 424.6C832.5 424.8 827.7 422.7 826 422.3L798.2 448L799.3 459.5L767 484L728 507.3L689 526.7L673.5 523.5L640 536.5L610 547L623.4 543.6C624 539.5 626.7 527.9 626.7 519C626.7 510.1 624.7 500 623.4 490C622.1 480 620.5 469 619 459C617.5 449 615.8 437.4 614.5 430C613.2 422.6 611.9 421.8 611 414.5C610.1 407.2 609.7 391.2 609.4 386.5Z" fill="url(#sfg)" fill-opacity="0.24"/>
<polygon points="681,368 749,329.5 775,302.5 783,299.5 787.9,297 787.9,354 790,358 796,383 801.5,403.4 805,432 799,446 799.3,459 767,483.5 728,506.8 706,517.7 697,480 686,430 681.5,395" fill="#0a0a0a"/>
<path d="M684 369.5Q684 441.5 708 513.5M690.5 365.9Q690.6 437.9 713.9 509.9M697 362.3Q697.4 434.3 719.8 506.3M703.5 358.7Q704.3 430.7 725.7 502.7M710 355.1Q711.5 427.1 731.6 499.1M716.5 351.5Q718.8 423.5 737.5 495.5M723 347.9Q726.3 419.9 743.4 491.9M729.5 344.3Q734 416.3 749.3 488.3M736 340.7Q741.8 412.7 755.2 484.8M742.5 337.1Q749.9 409.1 761.1 481.2M749 333.5Q758.1 405.5 767 477.6M755.5 326.8Q766.5 400.4 772.9 474M762 320.1Q775.1 395.2 778.8 470.4M768.5 313.4Q783.9 390.1 784.7 466.8M775 306.7Q792.9 384.9 790.6 463.2M781.5 304.2Q802 381.9 796.5 459.6" fill="none" stroke="#4c4c4c" stroke-width="3.2" clip-path="url(#bodyclip)"/>
<path d="M684 369.5Q684 441.5 708 513.5M690.5 365.9Q690.6 437.9 713.9 509.9M697 362.3Q697.4 434.3 719.8 506.3M703.5 358.7Q704.3 430.7 725.7 502.7M710 355.1Q711.5 427.1 731.6 499.1M716.5 351.5Q718.8 423.5 737.5 495.5M723 347.9Q726.3 419.9 743.4 491.9M729.5 344.3Q734 416.3 749.3 488.3M736 340.7Q741.8 412.7 755.2 484.8M742.5 337.1Q749.9 409.1 761.1 481.2M749 333.5Q758.1 405.5 767 477.6M755.5 326.8Q766.5 400.4 772.9 474M762 320.1Q775.1 395.2 778.8 470.4M768.5 313.4Q783.9 390.1 784.7 466.8M775 306.7Q792.9 384.9 790.6 463.2M781.5 304.2Q802 381.9 796.5 459.6" fill="none" stroke="#0c0c0c" stroke-width="1.3" clip-path="url(#bodyclip)"/>
<path d="M682.9 378.1Q683.9 430 697.4 481.8M689.4 376Q690.6 424.9 702.5 473.9M696 373.8Q697.4 419.9 707.8 466M702.6 371.7Q704.2 414.9 713.2 458.1M709.3 369.5Q711.1 409.8 718.9 450.2M716 367.3Q718.1 404.8 724.7 442.2M722.8 365.2Q725.2 399.8 730.7 434.3M729.6 363Q732.2 394.7 736.9 426.4M736.6 360.9Q739.3 389.7 743.3 418.5M743.6 358.7Q746.5 384.6 749.8 410.6M750.7 356.6Q753.6 379.6 756.5 402.7" fill="none" stroke="#ffffff" stroke-width="1.2" stroke-dasharray="2.2 3.8"/>
<path d="M609.4 386.5C614.5 384.5 629.3 378.5 640 374.5C650.7 370.5 661.6 367.7 673.5 362.5C685.4 357.3 698.6 350.6 711.4 343.5C724.1 336.4 737.2 328 750 320C762.8 312 775.2 305.2 788 295.6C800.8 286 820.1 267.8 826.5 262.2M826.5 262.2C827 267.6 827.8 283.5 829.4 294.5C831 305.5 833.4 316.5 836 328C838.6 339.5 842.6 354.4 845 363.6C847.4 372.8 849.4 376.4 850.5 383C851.6 389.6 852.2 397 851.7 403.4C851.2 409.8 848 418.2 847.2 421.2M847.2 421.2C845.3 421.8 839.5 424.4 836 424.6C832.5 424.8 827.7 422.7 826 422.3M826 422.3L798.2 448M623.4 543.6C624 539.5 626.7 527.9 626.7 519C626.7 510.1 624.7 500 623.4 490C622.1 480 620.5 469 619 459C617.5 449 615.8 437.4 614.5 430C613.2 422.6 611.9 421.8 611 414.5C610.1 407.2 609.7 391.2 609.4 386.5M623.4 543.6L610 547L617.8 553.6L623.4 543.6M610 547L640 536.5L673.5 523.5L689 526M623.4 491.4L640 485L689 465.8M800.4 401.2C803.6 398.4 812 390.9 819.4 384.7C826.8 378.5 840.7 367.6 845 364.2M676.8 428C677 421.5 688 421.5 699 423C712 425 722.5 431 722.5 438C722 444.5 712 445.5 700 445C686 444.5 683 437 676.8 428ZM688 503C689 500 695 501 703 502.5C714 504.5 727 505.5 728 508.5C722 514 708 520 696 519.5C690 517 687.5 509 688 503Z" fill="none" stroke="#ffff00" stroke-width="1"/>
<path d="M689 465.8C699.8 460.2 735.1 443.2 753.7 432.4C772.3 421.6 792.6 406.4 800.4 401.2" fill="none" stroke="#ffff00" stroke-width="1" stroke-dasharray="2.5 2"/>
<g><path d="M335.5 506V492" stroke="#0000c8" stroke-width="1.2"/><path d="M335.5 482.2C337 485 341 488 341 490C340.500 492.800 330.500 492.800 330 490C330 488 334 485 335.500 482.200Z" fill="#000096"/><path d="M335.5 506L347 500" stroke="#00a800" stroke-width="1.2"/><path d="M346.1 493.400L356.700 494.600L353.200 503.400L346.900 499.600Z" fill="#007800"/><path d="M346.100 493.400L356.700 494.600L350 497.500Z" fill="#009a00"/><path d="M335.5 506L346.5 512" stroke="#b40000" stroke-width="1.2"/><path d="M352.600 509.100L356.700 518.300L346.600 519.800L346.100 512.500Z" fill="#8a0000"/></g>
<defs><linearGradient id="vcl" x1="0" y1="0" x2="1" y2="1"><stop offset="0" stop-color="#dadada"/><stop offset="1" stop-color="#ececec"/></linearGradient><linearGradient id="vcr" x1="0" y1="0" x2="1" y2="1"><stop offset="0" stop-color="#ececec"/><stop offset="1" stop-color="#d6d6d6"/></linearGradient></defs>
<g stroke="#ababab" stroke-width="1.1" stroke-linejoin="round"><polygon points="1127.4,155.5 1149.1,165.6 1127.6,177.6 1105.3,165.6" fill="#e8e8e8"/><polygon points="1105.3,165.6 1127.6,177.6 1127.6,204.6 1107,189.1" fill="url(#vcl)"/><polygon points="1127.6,177.6 1149.1,165.6 1147.9,189.1 1127.6,204.6" fill="url(#vcr)"/></g>
<g font-family="Liberation Sans, sans-serif" fill="#868686" font-size="7.5"><text transform="matrix(-0.9 -0.42 0.9 -0.42 1138.6 169.4)" textLength="19" lengthAdjust="spacingAndGlyphs">GÓRA</text><text transform="matrix(0.87 0.47 0 1 1111 183.5)" textLength="12" lengthAdjust="spacingAndGlyphs">TYŁ</text><text transform="matrix(0 1 0.87 -0.5 1139.8 172.5)" textLength="21" lengthAdjust="spacingAndGlyphs" font-size="6.5">PRAWA</text></g>
<rect x="1130.9" y="216" width="33.8" height="263.3" rx="4.5" fill="#efefef" stroke="#b6b6b6" stroke-width="1.6"/>
<circle cx="1156.6" cy="223.1" r="3.6" fill="#b8b8b8"/><path d="M1155 221.5l3 3m0-3l-3 3" stroke="#f4f4f4" stroke-width="0.9"/><circle cx="1156.6" cy="471.8" r="3.6" fill="#b8b8b8"/><path d="M1154.7 471.8h3.6" stroke="#f4f4f4" stroke-width="1"/><g transform="translate(0.8 0.6)"><path d="M1147.5 237.5h10.5v10.8a10.6 10.6 0 1 1 -10.5 -10.8z" fill="#e6e6e6" stroke="#9a9a9a" stroke-width="1"/><circle cx="1147.3" cy="248.6" r="6.4" fill="#f4f4f4" stroke="#9a9a9a" stroke-width="1"/><path d="M1141.5 256.5a7 7 0 0 1 11.6 0" fill="none" stroke="#a8a8a8" stroke-width="0.9"/></g><path d="M1145 270.3h5l-2.5 2.8z" fill="#8c8c8c"/><path d="M1145 348.4h5l-2.5 2.8z" fill="#8c8c8c"/><path d="M1145 390.4h5l-2.5 2.8z" fill="#8c8c8c"/><path d="M1145 456.4h5l-2.5 2.8z" fill="#8c8c8c"/><path d="M1135 277.5h25.5" stroke="#c4c4c4" stroke-width="1"/><path transform="translate(1147.6 295.4) scale(1.18) translate(-1147.3 -293.2)" d="M1141.5 296.5c-1.5-2.5-3-4.5-4-5.5c1-1.5 2.7-0.7 3.8 0.6l1.4 1.8l-0.8-8c1.4-1.2 2.6-0.4 2.9 1l0.8 5.2l0.3-7.3c1.3-1.2 2.8-0.7 3 0.8l0.2 6.8l1.2-6.4c1.4-0.9 2.7-0.2 2.7 1.2l-0.7 6.8l1.8-4.2c1.3-0.6 2.3 0 2.2 1.3c-0.8 3.3-1.6 6.2-2.6 8.3c-0.7 1.6-1.5 2.8-1.6 4.6h-7.6c-0.4-2.1-1.6-4.5-3-7z" fill="#fafafa" stroke="#8c8c8c" stroke-width="0.9" stroke-linejoin="round"/><path d="M1136.5 316.5v13.5l3.2-2.8l2.3 4.6l2-1l-2.2-4.4l4.2-0.4z" fill="#fafafa" stroke="#8c8c8c" stroke-width="0.9" stroke-linejoin="round"/><circle cx="1152" cy="330" r="4.3" fill="#f8f8f8" stroke="#8c8c8c" stroke-width="1"/><path d="M1155 333.2l4 4" stroke="#777" stroke-width="2" stroke-linecap="round"/><ellipse cx="1147.5" cy="370" rx="4.6" ry="10" fill="none" stroke="#8c8c8c" stroke-width="1"/><path d="M1143 366.3c-3.6 0.8-6 2.1-6 3.7c0 2.5 5 4.3 10.5 4.3s10.5-1.8 10.5-4.3c0-1.6-2.4-2.9-6-3.7" fill="none" stroke="#8c8c8c" stroke-width="1"/><path d="M1147.5 366v7m-3.3-3.5h6.6" stroke="#777" stroke-width="1"/><path d="M1137.5 367.5l-1 3.5l3.4-0.6zM1157.5 367.5l1 3.5l-3.4-0.6zM1145 360.5l2.5 1.8l2.5-1.8z" fill="#777"/><path d="M1137 409.5l5-7v5.2l5-4v5.8" fill="#f4f4f4" stroke="#9a9a9a" stroke-width="0.9"/><rect x="1136.3" y="409.5" width="22.4" height="13" fill="#ececec" stroke="#8c8c8c" stroke-width="1"/><rect x="1140" y="413" width="15" height="6.5" fill="#c4c8d2" stroke="#8c8c8c" stroke-width="0.8"/><path d="M1146 436.5h8l3-2.2v8.5l-3 2.7h-8z" fill="#f4f4f4" stroke="#8c8c8c" stroke-width="0.9"/><path d="M1154 436.5v9" stroke="#8c8c8c" stroke-width="0.8"/><circle cx="1145" cy="437" r="4.8" fill="#a9c4ee" stroke="#7d95c2" stroke-width="0.8"/><circle cx="1143.6" cy="435.4" r="1.8" fill="#e4eefc"/>
<rect x="1132.7" y="122.7" width="10.6" height="9.6" fill="none" stroke="#3c3c3c" stroke-width="1.4"/><path d="M1138.6 122.7v9.6M1138.6 127.6h4.7" stroke="#3c3c3c" stroke-width="1.2" fill="none"/><path d="M1132 123h12" stroke="#3c3c3c" stroke-width="2" fill="none"/>
<path d="M1153.6 122.6l9.8 9.8m0-9.8l-9.8 9.8" stroke="#3c3c3c" stroke-width="1.4" fill="none"/></svg>
<span class="tx " style="left:16.4px;top:3.00px;font-size:13px;line-height:17px;color:#ffffff;transform:scaleX(0.9068)">Plik</span>
<span class="tx " style="left:60.4px;top:3.00px;font-size:13px;line-height:17px;color:#2a2a2a;transform:scaleX(0.9076)">Model 3D</span>
<span class="tx " style="left:130.9px;top:3.00px;font-size:13px;line-height:17px;color:#505050;transform:scaleX(0.8692)">Szkic</span>
<span class="tx " style="left:176.9px;top:3.00px;font-size:13px;line-height:17px;color:#505050;transform:scaleX(0.9027)">Opisz</span>
<span class="tx " style="left:224.9px;top:3.00px;font-size:13px;line-height:17px;color:#505050;transform:scaleX(0.9095)">Sprawdź</span>
<span class="tx " style="left:289.9px;top:3.00px;font-size:13px;line-height:17px;color:#505050;transform:scaleX(0.8884)">Narzędzia</span>
<span class="tx " style="left:360.9px;top:3.00px;font-size:13px;line-height:17px;color:#505050;transform:scaleX(0.8805)">Zarządzanie</span>
<span class="tx " style="left:442.9px;top:3.00px;font-size:13px;line-height:17px;color:#505050;transform:scaleX(0.9689)">Widok</span>
<span class="tx " style="left:496.9px;top:3.00px;font-size:13px;line-height:17px;color:#505050;transform:scaleX(0.9077)">Środowiska</span>
<span class="tx " style="left:576.9px;top:3.00px;font-size:13px;line-height:17px;color:#505050;transform:scaleX(0.9120)">Rozpocznij</span>
<span class="tx " style="left:653.9px;top:3.00px;font-size:13px;line-height:17px;color:#505050;transform:scaleX(0.9367)">Współpracuj</span>
<span class="tx " style="left:739.9px;top:3.00px;font-size:13px;line-height:17px;color:#505050;transform:scaleX(0.9215)">Woodwork Design</span>
<span class="tx " style="left:856.9px;top:3.00px;font-size:13px;line-height:17px;color:#505050;transform:scaleX(0.9106)">Przygotowanie szkieletu</span>
<span class="tx " style="left:16.9px;top:62.00px;font-size:13px;line-height:17px;color:#3a3a3a;transform:scaleX(0.9120)">Rozpocznij</span>
<span class="tx " style="left:24.9px;top:77.00px;font-size:13px;line-height:17px;color:#3a3a3a;transform:scaleX(0.8550)">szkic 2D</span>
<span class="tx " style="left:31.9px;top:98.00px;font-size:13px;line-height:17px;color:#3a3a3a;transform:scaleX(0.8692)">Szkic</span>
<span class="tx " style="left:92.9px;top:62.00px;font-size:13px;line-height:17px;color:#3a3a3a;transform:scaleX(0.9207)">Wyciągnięcie proste</span>
<span class="tx " style="left:205.4px;top:62.00px;font-size:13px;line-height:17px;color:#3a3a3a;transform:scaleX(0.9688)">Obrót</span>
<span class="tx " style="left:265.9px;top:28.00px;font-size:13px;line-height:17px;color:#3a3a3a;transform:scaleX(0.8989)">Przeciągnięcie</span>
<span class="tx " style="left:265.9px;top:52.00px;font-size:13px;line-height:17px;color:#3a3a3a;transform:scaleX(0.8893)">Wyciąg. złoż.</span>
<span class="tx " style="left:265.9px;top:76.00px;font-size:13px;line-height:17px;color:#3a3a3a;transform:scaleX(0.9471)">Zwój</span>
<span class="tx " style="left:279.9px;top:98.00px;font-size:13px;line-height:17px;color:#3a3a3a;transform:scaleX(0.9394)">Utwórz</span>
<span class="tx " style="left:371.9px;top:28.00px;font-size:13px;line-height:17px;color:#3a3a3a;transform:scaleX(0.9405)">Wypukłość</span>
<span class="tx " style="left:371.9px;top:52.00px;font-size:13px;line-height:17px;color:#3a3a3a;transform:scaleX(0.9292)">Wyprowadź</span>
<span class="tx " style="left:371.9px;top:76.00px;font-size:13px;line-height:17px;color:#3a3a3a;transform:scaleX(0.9420)">Żebro</span>
<span class="tx " style="left:464.9px;top:76.00px;font-size:13px;line-height:17px;color:#3a3a3a;transform:scaleX(0.8915)">Rozwiń</span>
<span class="tx " style="left:516.4px;top:62.00px;font-size:13px;line-height:17px;color:#3a3a3a;transform:scaleX(0.9518)">Otwór</span>
<span class="tx " style="left:554.9px;top:62.00px;font-size:13px;line-height:17px;color:#3a3a3a;transform:scaleX(0.9181)">Zaokrąglenie</span>
<span class="tx " style="left:594.9px;top:98.00px;font-size:13px;line-height:17px;color:#3a3a3a;transform:scaleX(0.9550)">Zmień</span>
<span class="tx " style="left:747.4px;top:62.00px;font-size:13px;line-height:17px;color:#3a3a3a;transform:scaleX(0.8443)">Płaszczyzna</span>
<span class="tx " style="left:733.4px;top:98.00px;font-size:13px;line-height:17px;color:#3a3a3a;transform:scaleX(0.9215)">Elementy konstrukcyjne</span>
<span class="tx " style="left:879.9px;top:98.00px;font-size:13px;line-height:17px;color:#3a3a3a;transform:scaleX(0.8519)">Szyk</span>
<span class="tx " style="left:924.4px;top:98.00px;font-size:13px;line-height:17px;color:#3a3a3a;transform:scaleX(0.8988)">Powierzchnia</span>
<span class="tx " style="left:1027.9px;top:62.00px;font-size:13px;line-height:17px;color:#3a3a3a;transform:scaleX(0.8808)">Przekształć w</span>
<span class="tx " style="left:1004.9px;top:77.00px;font-size:13px;line-height:17px;color:#3a3a3a;transform:scaleX(0.9292)">konstrukcję blachową</span>
<span class="tx " style="left:1034.4px;top:98.00px;font-size:13px;line-height:17px;color:#3a3a3a;transform:scaleX(0.8651)">Przekształć</span>
<span class="tx tr" style="left:7.9px;top:121.00px;font-size:11px;line-height:14px;color:#1e1e2e;transform:scaleX(0.9343)">Model</span>
<span class="tx tr" style="left:24.9px;top:145.00px;font-size:11px;line-height:14px;color:#1e1e1e;transform:scaleX(1.0449)">PC front.ipt</span>
<span class="tx tr" style="left:40.9px;top:165.00px;font-size:11px;line-height:14px;color:#1e1e1e;transform:scaleX(1.0130)">Korpusy bryłowe(1)</span>
<span class="tx tr" style="left:56.9px;top:185.00px;font-size:11px;line-height:14px;color:#1e1e1e;transform:scaleX(1.0261)">Bryła1</span>
<span class="tx tr" style="left:40.9px;top:205.00px;font-size:11px;line-height:14px;color:#1e1e1e;transform:scaleX(0.9843)">Korpusy powierzchniowe(7)</span>
<span class="tx tr" style="left:56.9px;top:225.00px;font-size:11px;line-height:14px;color:#1e1e1e;transform:scaleX(1.0650)">Srf1</span>
<span class="tx tr" style="left:56.9px;top:245.00px;font-size:11px;line-height:14px;color:#1e1e1e;transform:scaleX(1.0650)">Srf2</span>
<span class="tx tr" style="left:56.9px;top:265.00px;font-size:11px;line-height:14px;color:#1e1e1e;transform:scaleX(1.0650)">Srf3</span>
<span class="tx tr" style="left:56.9px;top:285.00px;font-size:11px;line-height:14px;color:#1e1e1e;transform:scaleX(1.0650)">Srf4</span>
<span class="tx tr" style="left:56.9px;top:305.00px;font-size:11px;line-height:14px;color:#1e1e1e;transform:scaleX(1.0650)">Srf6</span>
<span class="tx tr" style="left:56.9px;top:325.00px;font-size:11px;line-height:14px;color:#1e1e1e;transform:scaleX(1.0650)">Srf7</span>
<span class="tx tr" style="left:56.9px;top:345.00px;font-size:11px;line-height:14px;color:#1e1e1e;transform:scaleX(1.0650)">Srf8</span>
<span class="tx tr" style="left:40.9px;top:365.00px;font-size:11px;line-height:14px;color:#1e1e1e;transform:scaleX(0.9867)">Widok: Główna</span>
<span class="tx tr" style="left:40.9px;top:385.00px;font-size:11px;line-height:14px;color:#1e1e1e;transform:scaleX(0.9945)">Początek</span>
<span class="tx tr" style="left:40.9px;top:405.00px;font-size:11px;line-height:14px;color:#1e1e1e;transform:scaleX(0.9856)">Wyciągnięcie proste2 (Nowa bryła x 40 mm)</span>
<span class="tx tr" style="left:40.9px;top:425.00px;font-size:11px;line-height:14px;color:#1e1e1e;transform:scaleX(1.0378)">Odbij1</span>
<span class="tx tr" style="left:40.9px;top:445.00px;font-size:11px;line-height:14px;color:#1e1e1e;transform:scaleX(0.9739)">Wyciągnięcie proste3 (Połączenie x HEIGHT +</span>
<span class="tx tr" style="left:40.9px;top:465.00px;font-size:11px;line-height:14px;color:#1e1e1e;transform:scaleX(0.9813)">Pochylenie ściany7 (x 10 deg)</span>
<span class="tx tr" style="left:40.9px;top:485.00px;font-size:11px;line-height:14px;color:#1e1e1e;transform:scaleX(0.9813)">Pochylenie ściany8 (x 10 deg)</span>
<span class="tx tr" style="left:40.9px;top:505.00px;font-size:11px;line-height:14px;color:#1e1e1e;transform:scaleX(0.9958)">demo1</span>
<span class="tx tr" style="left:40.9px;top:525.00px;font-size:11px;line-height:14px;color:#1e1e1e;transform:scaleX(0.9473)">Szkic10</span>
<span class="tx tr" style="left:40.9px;top:545.00px;font-size:11px;line-height:14px;color:#1e1e1e;transform:scaleX(1.0002)">Oś konstrukcyjna1</span>
<span class="tx " style="left:318.9px;top:560.00px;font-size:13px;line-height:17px;color:#2b8fd3;transform:scaleX(0.9303)">PC front.ipt</span>
<span class="tx " style="left:5.9px;top:588.00px;font-size:12px;line-height:16px;color:#2a2a2a;transform:scaleX(1.0077)">Gotowy</span>
<span class="tx " style="left:1078.4px;top:588.00px;font-size:12px;line-height:16px;color:#2a1a2a;transform:scaleX(0.9720)">1</span>
<span class="tx " style="left:1116.4px;top:588.00px;font-size:12px;line-height:16px;color:#2a1a2a;transform:scaleX(0.9720)">1</span>
<span class="tx " style="left:331.7px;top:469.00px;font-size:12px;line-height:16px;color:#4a4aff;transform:scaleX(1.1438)">Z</span>
<span class="tx " style="left:356.9px;top:484.00px;font-size:12px;line-height:16px;color:#45e645;transform:scaleX(1.0729)">Y</span>
<span class="tx " style="left:356.9px;top:514.00px;font-size:12px;line-height:16px;color:#ff4c4c;transform:scaleX(1.0729)">X</span>
</div>
</body></html>
